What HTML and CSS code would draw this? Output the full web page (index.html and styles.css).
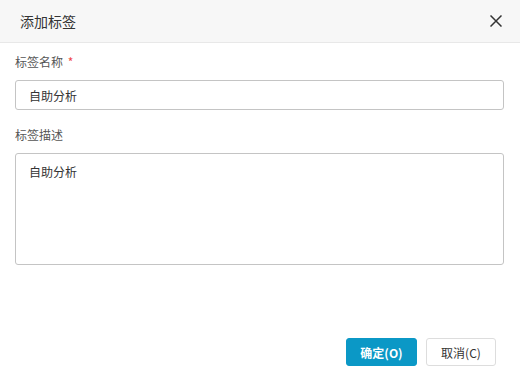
FILE: index.html
```html
<!DOCTYPE html>
<html lang="zh-CN">

<head>
    <meta charset="UTF-8" />
    <title>添加标签</title>
    <link rel="stylesheet" href="styles.css">
</head>

<body>
    <div class="dialog">
        <div class="dialog-head">
            <span class="dialog-title">添加标签</span>
            <span class="dialog-close">
                <svg width="12" height="12" viewBox="0 0 12 12">
                    <path d="M0.5 0.5L11.5 11.5M11.5 0.5L0.5 11.5" stroke="#333" stroke-width="1.5" fill="none" />
                </svg>
            </span>
        </div>
        <div class="dialog-body">
            <div class="field">
                <label class="field-label">标签名称 <em class="req">*</em></label>
                <input class="field-input" type="text" value="自助分析">
            </div>
            <div class="field">
                <label class="field-label">标签描述</label>
                <textarea class="field-area">自助分析</textarea>
            </div>
        </div>
        <div class="dialog-foot">
            <button class="btn btn-primary">确定(O)</button>
            <button class="btn btn-default">取消(C)</button>
        </div>
    </div>
</body>

</html>
```

FILE: styles.css
```css
* {
    margin: 0;
    padding: 0;
    box-sizing: border-box;
}

body {
    font-family: "Noto Sans CJK SC", "Noto Sans", sans-serif;
    font-size: 12px;
    color: #333;
    background: #fff;
}

.dialog {
    width: 520px;
    height: 380px;
    display: flex;
    flex-direction: column;
}

.dialog-head {
    height: 43px;
    background: #f7f7f7;
    border-bottom: 1px solid #e8e8e8;
    display: flex;
    align-items: center;
    justify-content: space-between;
    padding: 0 18px 0 20px;
}

.dialog-title {
    font-size: 14px;
    color: #333;
}

.dialog-close {
    display: flex;
}

.dialog-body {
    flex: 1;
    padding: 9px 16px 0 15px;
}

.field {
    display: flex;
    flex-direction: column;
}

.field + .field {
    margin-top: 15px;
}

.field-label {
    font-size: 12px;
    line-height: 20px;
    color: #555;
    margin-bottom: 8px;
}

.req {
    font-style: normal;
    color: #f04848;
    margin-left: 2px;
}

.field-input,
.field-area {
    width: 100%;
    border: 1px solid #c4c4c4;
    border-radius: 3px;
    font-family: inherit;
    font-size: 12px;
    color: #333;
    padding-left: 13px;
    padding-right: 13px;
    outline: none;
    background: #fff;
}

.field-input {
    height: 30px;
}

.field-area {
    height: 112px;
    padding-top: 9px;
    resize: none;
    line-height: 18px;
}

.dialog-foot {
    display: flex;
    justify-content: flex-end;
    gap: 9px;
    padding: 0 24px 14px 0;
}

.btn {
    width: 71px;
    height: 28px;
    border-radius: 3px;
    font-family: inherit;
    font-size: 12px;
    cursor: pointer;
}

.btn-primary {
    background: #0b98c6;
    border: 1px solid #0b98c6;
    color: #fff;
    font-weight: bold;
}

.btn-default {
    width: 70px;
    background: #fff;
    border: 1px solid #ddd;
    color: #333;
}
```
